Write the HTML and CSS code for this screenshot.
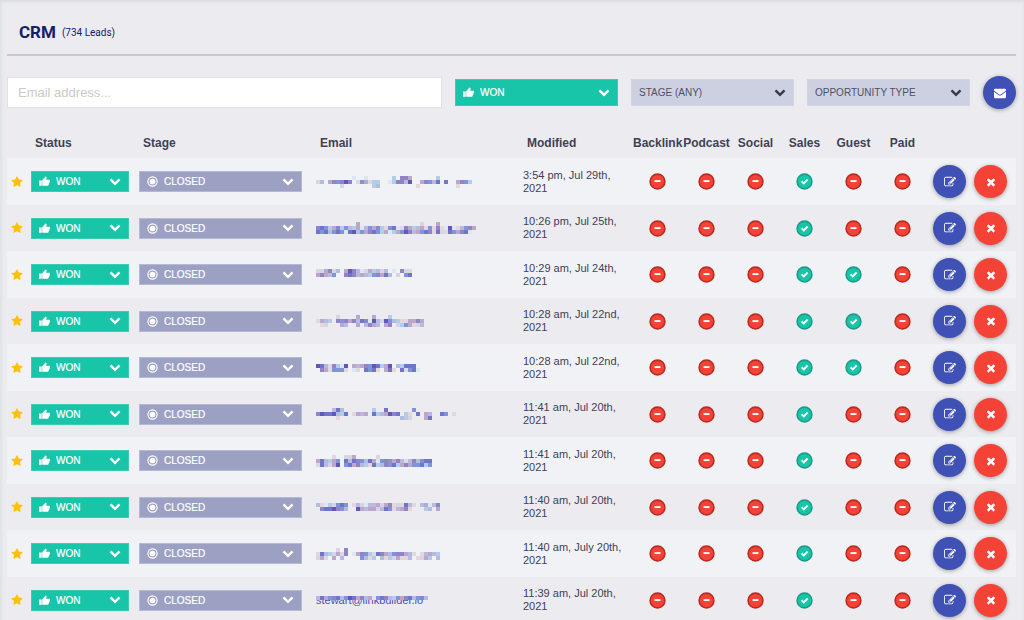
FILE: index.html
```html
<!DOCTYPE html>
<html lang="en">
<head>
<meta charset="utf-8">
<meta name="viewport" content="width=device-width, initial-scale=1">
<title>CRM</title>
<link rel="stylesheet" href="styles.css">
</head>
<body>
<svg class="sprite" aria-hidden="true">
  <symbol id="thumb" viewBox="0 0 24 24"><path d="M0 21h6V10H0v11zm24-11c0-1.100-.9-2-2-2h-6.300l.95-4.570.03-.32c0-.41-.17-.79-.44-1.060L14.200 1 7 9V21h12c.83 0 1.540-.5 1.840-1.220l3.020-7.050c.09-.23.14-.47.14-.73v-2z"/></symbol>
  <symbol id="chevron" viewBox="0 0 12 8"><path d="M1.500 1.300 6 5.900l4.500-4.600" fill="none" stroke="currentColor" stroke-width="2.400"/></symbol>
  <symbol id="target" viewBox="0 0 12 12"><circle cx="6" cy="6" r="5" fill="none" stroke="currentColor" stroke-width="1.300"/><circle cx="6" cy="6" r="3.100"/></symbol>
  <symbol id="star" viewBox="0 0 1792 1792"><path d="M1728 647q0 22-26 48l-363 354 86 500q1 7 1 20 0 21-10.500 35.500t-30.500 14.500q-19 0-40-12l-449-236-449 236q-22 12-40 12-21 0-31.500-14.500t-10.500-35.500q0-6 2-20l86-500-364-354q-25-27-25-48 0-37 56-46l502-73 225-455q19-41 49-41t49 41l225 455 502 73q56 9 56 46z"/></symbol>
  <symbol id="edit" viewBox="0 0 1792 1792"><path d="M888 1184l116-116-152-152-116 116v56h96v96h56zm440-720q-16-16-33 1l-350 350q-17 17-1 33t33-1l350-350q17-17 1-33zm80 594v190q0 119-84.500 203.500t-203.500 84.500h-832q-119 0-203.500-84.500t-84.500-203.500v-832q0-119 84.500-203.500t203.500-84.500h832q63 0 117 25 15 7 18 23 3 17-9 29l-49 49q-14 14-32 8-23-6-45-6h-832q-66 0-113 47t-47 113v832q0 66 47 113t113 47h832q66 0 113-47t47-113v-126q0-13 9-22l64-64q15-15 35-7t20 29zm-96-738l288 288-672 672h-288v-288zm444 132l-92 92-288-288 92-92q28-28 68-28t68 28l152 152q28 28 28 68t-28 68z"/></symbol>
  <symbol id="times" viewBox="0 0 1792 1792"><path d="M1490 1322q0 40-28 68l-136 136q-28 28-68 28t-68-28l-294-294-294 294q-28 28-68 28t-68-28l-136-136q-28-28-28-68t28-68l294-294-294-294q-28-28-28-68t28-68l136-136q28-28 68-28t68 28l294 294 294-294q28-28 68-28t68 28l136 136q28 28 28 68t-28 68l-294 294 294 294q28 28 28 68z"/></symbol>
  <symbol id="mail" viewBox="0 0 1792 1792"><path d="M1792 710v794q0 66-47 113t-113 47h-1472q-66 0-113-47t-47-113v-794q44 49 101 87 362 246 497 345 57 42 92.500 65.500t94.500 48 110 24.500h2q51 0 110-24.500t94.500-48 92.500-65.500q170-123 498-345 57-39 100-87zm0-294q0 79-49 151t-122 123q-376 261-468 325-10 7-42.500 31t-54 38.500-52 32.500-57.500 27-50 9h-2q-23 0-50-9t-57.500-27-52-32.500-54-38.500-42.500-31q-91-64-262-182.500t-205-142.500q-62-42-117-115.500t-55-136.500q0-78 41.500-130t118.500-52h1472q65 0 112.500 47t47.500 113z"/></symbol>
  <symbol id="no" viewBox="0 0 17 17"><circle cx="8.500" cy="8.500" r="7.400" fill="#f44336" stroke="#bd2a20" stroke-width="1.600"/><path d="M5.500 8.100h6" stroke="#fff" stroke-width="1.900"/></symbol>
  <symbol id="yes" viewBox="0 0 17 17"><circle cx="8.500" cy="8.500" r="7.400" fill="#18c5a9" stroke="#1c9c88" stroke-width="1.600"/><path d="M5.600 8.300l2.200 2.100 3.800-3.900" fill="none" stroke="#fff" stroke-width="1.900"/></symbol>
</svg>
<main class="page">
  <header class="title-bar">
    <h1 class="title">CRM</h1>
    <span class="count">(734 Leads)</span>
  </header>
  <form class="filters">
    <input class="search" type="text" placeholder="Email address..." aria-label="Email address">
    <div class="pick pick-large pick-won">
      <select class="pick-select with-icon" aria-label="Status"><option>WON</option></select>
      <svg class="pick-icon"><use href="#thumb"/></svg>
      <svg class="pick-arrow"><use href="#chevron"/></svg>
    </div>
    <div class="pick pick-large pick-any">
      <select class="pick-select" aria-label="Stage"><option>STAGE (ANY)</option></select>
      <svg class="pick-arrow"><use href="#chevron"/></svg>
    </div>
    <div class="pick pick-large pick-any">
      <select class="pick-select" aria-label="Opportunity type"><option>OPPORTUNITY TYPE</option></select>
      <svg class="pick-arrow"><use href="#chevron"/></svg>
    </div>
    <button class="round round-blue" type="button" aria-label="Send email"><svg class="round-icon"><use href="#mail"/></svg></button>
  </form>
  <table class="leads">
    <colgroup>
      <col class="col-star"><col class="col-status"><col class="col-stage"><col><col class="col-date">
      <col class="col-flag"><col class="col-flag"><col class="col-flag"><col class="col-flag"><col class="col-flag"><col class="col-flag">
      <col class="col-actions">
    </colgroup>
    <thead>
      <tr>
        <th></th><th>Status</th><th>Stage</th><th>Email</th><th>Modified</th>
        <th class="flag">Backlink</th><th class="flag">Podcast</th><th class="flag">Social</th><th class="flag">Sales</th><th class="flag">Guest</th><th class="flag">Paid</th>
        <th></th>
      </tr>
    </thead>
    <tbody id="rows"></tbody>
  </table>
</main>
<script src="leads.js"></script>
</body>
</html>
```
FILE: styles.css
```css
* {
  box-sizing: border-box;
}

body {
  margin: 0;
  background: #ebebf0;
  color: #3f4254;
  font-family: "Liberation Sans", Arial, sans-serif;
  font-size: 11px;
  overflow: hidden;
}

svg {
  display: block;
  fill: currentColor;
}

.sprite {
  position: absolute;
  width: 0;
  height: 0;
}

.page {
  padding: 0 8px 0 7px;
  box-shadow: inset 0 2px 3px #dcdde2, inset 2px 0 3px #e3e4e9;
}

.title-bar {
  display: flex;
  align-items: center;
  gap: 6px;
  padding: 21px 12px 11px;
  border-bottom: 2px solid #c8c9ce;
  color: #14206a;
  font-family: Roboto, sans-serif;
}

.title {
  margin: 0;
  font-size: 17px;
  line-height: 22px;
  font-weight: 700;
}

.count {
  font-size: 10px;
}

.filters {
  display: grid;
  grid-template-columns: minmax(120px, 1fr) 163px 163px 163px 33px;
  align-items: center;
  gap: 13px;
  padding: 20px 0 19px;
}

.search {
  width: 100%;
  height: 31px;
  padding: 0 10px;
  border: 1px solid #e1e2e7;
  background: #fff;
  color: #3f4254;
  font: 13px "Liberation Sans", Arial, sans-serif;
}

.search::placeholder {
  color: #c9cacc;
  opacity: 1;
}

.pick {
  display: grid;
  grid-template-columns: 100%;
  align-items: center;
}

.pick > * {
  grid-area: 1 / 1;
}

.pick-select {
  appearance: none;
  width: 100%;
  height: 21px;
  margin: 0;
  padding: 0 24px 0 8px;
  border: 1px solid;
  border-radius: 0;
  font: 10px "Liberation Sans", Arial, sans-serif;
}

.pick-large .pick-select {
  height: 27px;
}

.pick-select.with-icon {
  padding-left: 24px;
}

.pick-won,
.pick-closed {
  color: #fff;
}

.pick-won .pick-select {
  border-color: #3ccbb3;
  background: #18c5a9;
  color: #fff;
}

.pick-closed .pick-select {
  border-color: #b5b9d6;
  background: #9ca1c4;
  color: #fff;
}

.pick-won .pick-select,
.pick-closed .pick-select {
  -webkit-text-stroke: 0.2px #fff;
}

.pick-any {
  color: #363a50;
}

.pick-any .pick-select {
  padding-left: 7px;
  border-color: #d3d5e4;
  background: #cdd0e1;
  color: #4c5067;
}

.pick-icon {
  width: 11px;
  height: 11px;
  margin-left: 8px;
  pointer-events: none;
}

.pick-arrow {
  justify-self: end;
  width: 12px;
  height: 8px;
  margin-right: 8px;
  pointer-events: none;
}

.round {
  display: grid;
  place-items: center;
  width: 33px;
  height: 33px;
  padding: 0;
  border: 0;
  border-radius: 50%;
  color: #fff;
  box-shadow: 0 1px 4px rgba(0, 0, 0, 0.35);
}

.round-blue {
  background: #3f51b5;
}

.round-red {
  background: #f44336;
}

.round-icon {
  width: 12px;
  height: 12px;
}

.leads {
  width: 100%;
  table-layout: fixed;
  border-collapse: collapse;
}

.col-star {
  width: 24px;
}

.col-status {
  width: 108px;
}

.col-stage {
  width: 177px;
}

.col-date {
  width: 110px;
}

.col-flag {
  width: 49px;
}

.col-actions {
  width: 89px;
}

th {
  height: 30px;
  padding: 0 0 0 4px;
  font-size: 12px;
  line-height: 14px;
  text-align: left;
  white-space: nowrap;
}

th.flag {
  padding: 0;
  text-align: center;
}

td {
  height: 46px;
  padding: 0;
  line-height: 13px;
}

tbody tr:nth-child(odd) {
  background: #f1f2f5;
}

tbody tr:nth-child(odd) td {
  height: 47px;
}

.star {
  width: 12px;
  height: 12px;
  margin-left: 4px;
  color: #ffc107;
}

td.status {
  padding-right: 10px;
}

td.stage {
  padding-right: 14px;
}

.email {
  display: block;
  position: relative;
  color: #4a50b8;
  text-decoration: none;
}

.email-text + .mosaic {
  position: absolute;
  left: 0;
  top: -2px;
  background: #ebebf0;
}

td.date {
  padding-right: 4px;
}

.flag-icon {
  width: 17px;
  height: 17px;
  margin: 0 auto;
}

.actions {
  display: flex;
  gap: 8px;
  padding-left: 6px;
}
```
FILE: leads.js
```javascript
// Each masked address is a grid of 4px cells, one letter per colour.
const palette = {
  a: '#d8d4e4', b: '#b5bae0', c: '#9085c4', d: '#6f76c8', e: '#6257b9',
  f: '#b2cdea', g: '#e4d6dd', h: '#bca6cb', i: '#8095d8', j: '#dbe8f1'
};

const leads = [
  { date: '3:54 pm, Jul 29th, 2021', guest: false, mask: [
    '.........j..j......f.cch......f.',
    'ab.hcicec.gihgff..jfccbe..hcibd.d..hcif',
    '......a.......fb.........g.........g'] },
  { date: '10:26 pm, Jul 25th, 2021', guest: false, mask: [
    '..........h...............a...h',
    'cdifhcfibfhjbihcfgidjgchfbhgigcgjejgbich',
    'didbidijdebihcdifhjfhiecbhidcgdagdihcdj'] },
  { date: '10:29 am, Jul 24th, 2021', guest: true, mask: [
    'aahcab.hecbjahfbab.j.cag',
    'hchbi..cdcbhbfichdb.a.id',
    ''] },
  { date: '10:28 am, Jul 22nd, 2021', guest: true, mask: [
    '.....a....h...h...f',
    'ghbf.cichcbdcjebaeibfgghhch',
    '.ga...hb..h.bchb.hc.afihgab'] },
  { date: '10:28 am, Jul 22nd, 2021', guest: true, mask: [
    'edbgcfje.hbhciedfhe.bfddd',
    '.chgiiig.jg.didg.hdg.dgidj'] },
  { date: '11:41 am, Jul 20th, 2021', guest: false, mask: [
    '....bdb.......f..d......i',
    'ceddebfd.ghbh.dfbhecd.fg.d.hb..di.g',
    '.....g...............bfa...hd'] },
  { date: '11:41 am, Jul 20th, 2021', guest: false, mask: [
    '....g..aah.....a',
    'hdbfhi.dbdcibdhjicihcbgbcbidd',
    'gdbahe.idhcbfgdfbcidfhchiidfi'] },
  { date: '11:40 am, Jul 20th, 2021', guest: false, mask: [
    'bgjfaidi.gbajbbhahcgagdbg.bhjbc',
    '.cddecib..ehbhhabdigbhcg...fb.h'] },
  { date: '11:40 am, July 20th, 2021', guest: false, mask: [
    '.....a.c',
    'gdbfahgc.jhcifgdchbicchbg.gbhbf',
    'ahg.h.b....ibgf.bgfahggb.gahf.b'] },
  { date: '11:39 am, Jul 20th, 2021', guest: false, email: 'stewart@linkbuilder.io', mask: [
    '',
    'bdhicdbiedhcbhjidcbfihcdbicb'] }
];

const use = (id, cls) => `<svg class="${cls}"><use href="#${id}"/></svg>`;

function mosaic(lines) {
  const cells = lines.map((line, y) => [...line].map((key, x) =>
    palette[key] ? `<rect x="${x * 4}" y="${y * 4}" width="4" height="4" fill="${palette[key]}"/>` : ''
  ).join('')).join('');
  const width = Math.max(...lines.map(line => line.length)) * 4;
  return `<svg class="mosaic" width="${width}" height="${lines.length * 4}" aria-hidden="true">${cells}</svg>`;
}

const pick = (kind, label, text, icon) => `<div class="pick ${kind}">
  <select class="pick-select with-icon" aria-label="${label}"><option>${text}</option></select>
  ${use(icon, 'pick-icon')}${use('chevron', 'pick-arrow')}</div>`;

document.getElementById('rows').innerHTML = leads.map(lead => `<tr>
  <td>${use('star', 'star')}</td>
  <td class="status">${pick('pick-won', 'Status', 'WON', 'thumb')}</td>
  <td class="stage">${pick('pick-closed', 'Stage', 'CLOSED', 'target')}</td>
  <td><a class="email" href="#" aria-label="Lead email">${lead.email ? `<span class="email-text">${lead.email}</span>` : ''}${mosaic(lead.mask)}</a></td>
  <td class="date">${lead.date}</td>
  ${[false, false, false, true, lead.guest, false].map(on => `<td>${use(on ? 'yes' : 'no', 'flag-icon')}</td>`).join('')}
  <td><div class="actions">
    <button class="round round-blue" type="button" aria-label="Edit">${use('edit', 'round-icon')}</button>
    <button class="round round-red" type="button" aria-label="Delete">${use('times', 'round-icon')}</button>
  </div></td>
</tr>`).join('');
```
